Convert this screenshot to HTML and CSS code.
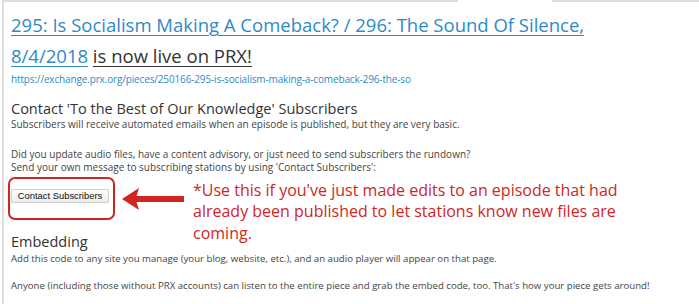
FILE: index.html
```html
<!DOCTYPE html>
<html lang="en">
<head>
<meta charset="utf-8">
<title>PRX piece published</title>
<link rel="stylesheet" href="styles.css">
</head>
<body>
<div class="frame">
  <div class="topline"><span class="seg seg-left"></span><span class="seg seg-right"></span></div>
  <div class="content">
    <h1 class="title"><a href="#" class="title-link">295: Is Socialism Making A Comeback? / 296: The Sound Of Silence,</a><br><a href="#" class="title-link">8/4/2018</a> <span class="title-rest">is now live on PRX!</span></h1>
    <a href="#" class="url">https://exchange.prx.org/pieces/250166-295-is-socialism-making-a-comeback-296-the-so</a>

    <h2 class="section-head">Contact 'To the Best of Our Knowledge' Subscribers</h2>
    <p class="text text-first">Subscribers will receive automated emails when an episode is published, but they are very basic.</p>
    <p class="text text-gap">Did you update audio files, have a content advisory, or just need to send subscribers the rundown?<br>Send your own message to subscribing stations by using 'Contact Subscribers':</p>

    <div class="action-row">
      <div class="highlight-box">
        <button class="btn" type="button">Contact Subscribers</button>
      </div>
      <svg class="arrow" width="62" height="24" viewBox="0 0 62 24" aria-hidden="true">
        <path d="M0 12 L17 1 L14.5 9 L62 9 L62 15 L14.5 15 L17 23 Z" fill="#d0261f"/>
      </svg>
      <p class="note">*Use this if you've just made edits to an episode that had already been published to let stations know new files are coming.</p>
    </div>

    <h2 class="section-head embed-head">Embedding</h2>
    <p class="text text-small text-first">Add this code to any site you manage (your blog, website, etc.), and an audio player will appear on that page.</p>
    <p class="text text-small text-gap2">Anyone (including those without PRX accounts) can listen to the entire piece and grab the embed code, too. That's how your piece gets around!</p>
  </div>
</div>
</body>
</html>
```

FILE: styles.css
```css
html, body {
  margin: 0;
  padding: 0;
  background: #ffffff;
}

body {
  font-family: "Open Sans", "Noto Sans", sans-serif;
  color: #444;
  width: 699px;
  height: 304px;
  overflow: hidden;
}

.frame {
  margin-left: 2px;
  border-left: 2px solid #dcdcdc;
  height: 304px;
  box-sizing: border-box;
}

.topline {
  display: flex;
  height: 2px;
}

.seg {
  display: block;
  height: 2px;
  background: #dcdcdc;
}

.seg-left {
  width: 454px;
}

.seg-right {
  margin-left: 94px;
  flex: 1;
}

.content {
  padding-left: 7px;
}

.title {
  margin: 7px 0 0 0;
  font-size: 18.5px;
  font-weight: 400;
  line-height: 31px;
  color: #333;
  width: 640px;
}

.title-link {
  color: #2f8ac8;
  text-decoration: underline;
  text-underline-offset: 3px;
  text-decoration-thickness: 1px;
}

.title-rest {
  color: #333;
  text-decoration: underline;
  text-underline-offset: 3px;
  text-decoration-thickness: 1px;
}

.url {
  display: block;
  margin-top: 2px;
  font-size: 10px;
  letter-spacing: -0.15px;
  line-height: 13px;
  color: #2f8ac8;
  text-decoration: none;
}

.section-head {
  margin: 14px 0 0 0;
  font-size: 14.5px;
  font-weight: 400;
  line-height: 17px;
  color: #333;
}

.text {
  margin: 0;
  font-size: 10px;
  line-height: 13px;
  color: #444;
}

.text-first {
  margin-top: 1px;
}

.text-small {
  font-size: 9.65px;
}

.text-gap {
  margin-top: 16.5px;
}

.text-gap2 {
  margin-top: 13.5px;
}

.action-row {
  display: flex;
  align-items: flex-start;
  margin: 3.5px 0 0 -3px;
}

.highlight-box {
  box-sizing: border-box;
  width: 107px;
  height: 43px;
  border: 2px solid #d0261f;
  border-radius: 7px;
  padding: 10px 0 0 1px;
}

.btn {
  display: block;
  box-sizing: border-box;
  width: 98px;
  height: 14px;
  padding: 0;
  margin: 0;
  border: 1px solid #cfcfcf;
  border-radius: 2px;
  background: linear-gradient(#fdfdfd, #ededed);
  font-family: "Liberation Sans", Arial, sans-serif;
  font-size: 9.4px;
  line-height: 12px;
  color: #111;
  text-align: center;
}

.arrow {
  display: block;
  flex: none;
  margin: 10px 0 0 7px;
}

.note {
  margin: 2.5px 0 -30px 9px;
  width: 445px;
  font-size: 16px;
  line-height: 21.5px;
  color: #d0261f;
}

.embed-head {
  margin-top: 13.5px;
  line-height: 16px;
}

.embed-head + .text-first {
  margin-top: 2.5px;
}
```
